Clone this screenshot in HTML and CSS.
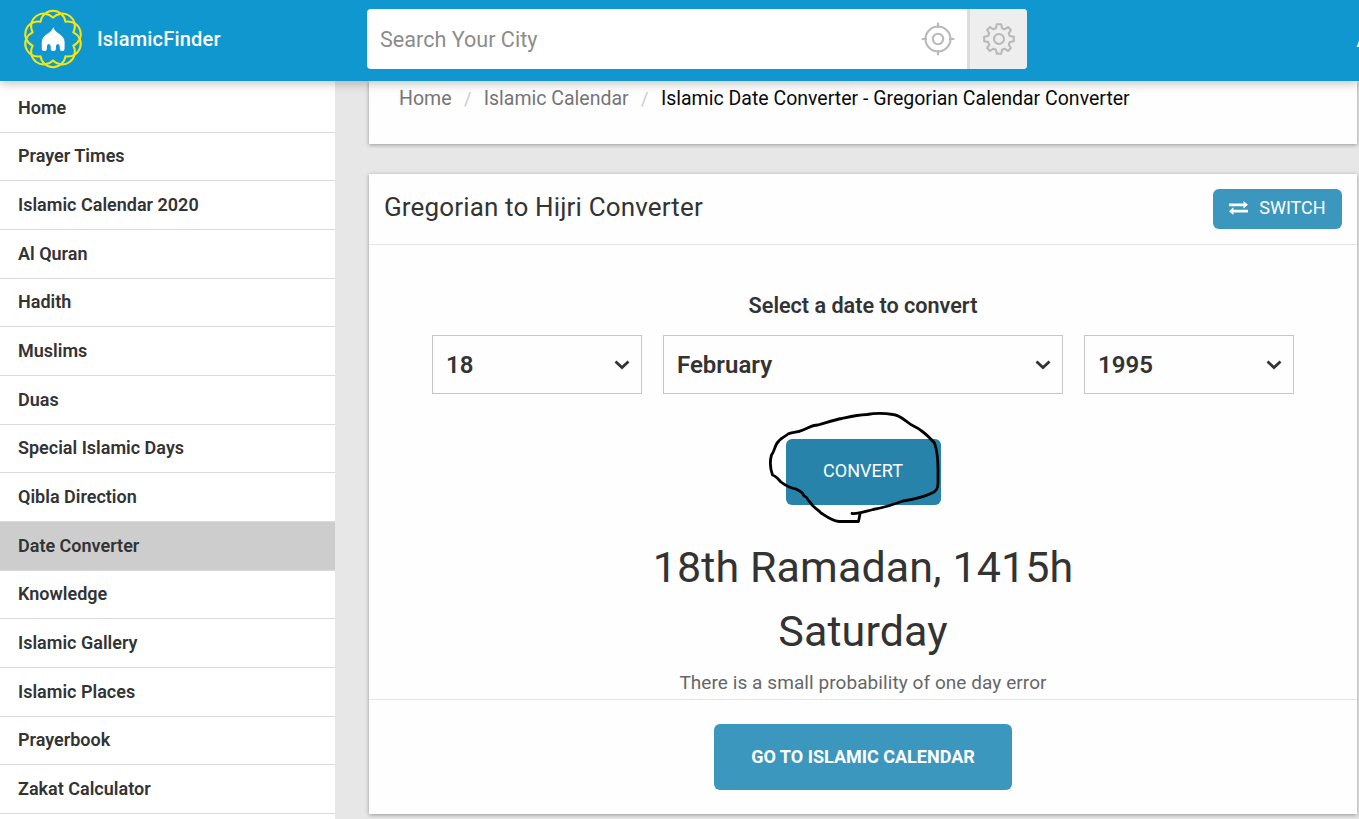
FILE: index.html
```html
<!DOCTYPE html>
<html lang="en">
<head>
  <meta charset="UTF-8" />
  <title>Islamic Date Converter - Gregorian Calendar Converter</title>
  <link rel="stylesheet" href="styles.css">
</head>
<body>

<header class="topbar">
  <a class="brand">
    <svg class="logo" width="60" height="60" viewBox="-30 -30 60 60">
      <g transform="scale(1.05)" fill="none" stroke="#f5e610" stroke-width="1.9" stroke-linejoin="round">
        <path d="M0 -20.3A12 12 0 0 1 19.3 -6.3A12 12 0 0 1 11.9 16.4A12 12 0 0 1 -11.9 16.4A12 12 0 0 1 -19.3 -6.3A12 12 0 0 1 0 -20.3Z"/>
        <path d="M0 20.3A12 12 0 0 1 -19.3 6.3A12 12 0 0 1 -11.9 -16.4A12 12 0 0 1 11.9 -16.4A12 12 0 0 1 19.3 6.3A12 12 0 0 1 0 20.3Z"/>
      </g>
      <path fill="#fff" d="M0.3 -12C1 -9 3 -7.2 6 -5.3C9.5 -3 11.6 -.5 11.6 3V9.5Q11.6 12 9.2 12Q6.8 12 6.8 9.5V7.5Q6.8 5 4.9 5Q2.9 5 2.9 7.5V9.5Q2.9 12 .3 12Q-2.3 12 -2.3 9.5V7.5Q-2.3 5 -4.2 5Q-6.1 5 -6.1 7.5V9.5Q-6.1 12 -8.7 12Q-11.2 12 -11.2 9.5V3C-11.2 -.5 -9 -3 -5.5 -5.3C-2.5 -7.2 -.5 -9 .3 -12Z"/>
    </svg>
    <span class="brand-name">IslamicFinder</span>
  </a>
  <div class="search">
    <span class="search-text">Search Your City</span>
    <svg class="locate" width="34" height="34" viewBox="-17 -17 34 34" fill="none" stroke="#b9b9b9" stroke-width="2.1">
      <circle r="12.5"/>
      <circle r="5.2"/>
      <path d="M0 -16.3V-11M0 16.3V11M-16.3 0H-11M16.3 0H11"/>
    </svg>
    <div class="settings">
      <svg width="34" height="34" viewBox="-17 -17 34 34" fill="none" stroke="#b9b9b9" stroke-width="2.1" stroke-linejoin="round">
        <circle r="5"/>
        <path d="M-2.2 -14.8H2.2L3.1 -10.8L5.6 -9.7L9 -11.9L11.9 -9L9.7 -5.6L10.8 -3.1L14.8 -2.2V2.2L10.8 3.1L9.7 5.6L11.9 9L9 11.9L5.6 9.7L3.1 10.8L2.2 14.8H-2.2L-3.1 10.8L-5.6 9.7L-9 11.9L-11.9 9L-9.7 5.6L-10.8 3.1L-14.8 2.2V-2.2L-10.8 -3.1L-9.7 -5.6L-11.9 -9L-9 -11.9L-5.6 -9.7L-3.1 -10.8Z"/>
      </svg>
    </div>
  </div>
  <a class="toplink">A</a>
</header>

<div class="page">
  <nav class="sidebar">
    <a>Home</a>
    <a>Prayer Times</a>
    <a>Islamic Calendar 2020</a>
    <a>Al Quran</a>
    <a>Hadith</a>
    <a>Muslims</a>
    <a>Duas</a>
    <a>Special Islamic Days</a>
    <a>Qibla Direction</a>
    <a class="active">Date Converter</a>
    <a>Knowledge</a>
    <a>Islamic Gallery</a>
    <a>Islamic Places</a>
    <a>Prayerbook</a>
    <a>Zakat Calculator</a>
  </nav>

  <main class="content">
    <div class="card breadcrumbs">
      <a>Home</a><span class="sep">/</span><a>Islamic Calendar</a><span class="sep">/</span><span class="current">Islamic Date Converter - Gregorian Calendar Converter</span>
    </div>

    <section class="card converter">
      <div class="card-head">
        <h1>Gregorian to Hijri Converter</h1>
        <button class="btn switch">
          <svg width="19" height="14" viewBox="0 0 19 14" fill="#fff">
            <path d="M0 2.5H14.5V0L19 3.8L14.5 7.6V5.2H0Z"/>
            <path d="M19 8.8H4.5V6.3L0 10.2L4.5 14V11.5H19Z"/>
          </svg>
          SWITCH
        </button>
      </div>

      <div class="card-body">
        <p class="label">Select a date to convert</p>
        <div class="selects">
          <div class="select">18<svg width="16" height="10" viewBox="0 0 16 10"><path d="M1.5 1.5L8 7.5L14.5 1.5"/></svg></div>
          <div class="select">February<svg width="16" height="10" viewBox="0 0 16 10"><path d="M1.5 1.5L8 7.5L14.5 1.5"/></svg></div>
          <div class="select">1995<svg width="16" height="10" viewBox="0 0 16 10"><path d="M1.5 1.5L8 7.5L14.5 1.5"/></svg></div>
        </div>
        <div class="convert-wrap">
          <button class="btn convert">CONVERT</button>
          <!-- hand drawn ring round the button -->
          <svg class="scribble" width="180" height="120" viewBox="765 407 180 120">
            <path d="M852 513.5C860 514 866 511 873 509.5C884 507.5 895 504 903 501C915 499 926 496 932 493C937 491 938 488 938 483V470C938 459 937 450 934.5 443C930 438 926 434 921 430.5C917 427 912 426 908 422.5C902 418 898 414.5 893 414.5C884 413 875 413 867 414.5C857 415 849 417 842 418.5C833 420 826 423 818 425C812 425 808 428 803 430C797 433 792 432 788 434C783 438 779 439 776.5 444C774 449 774 452 771.5 455C769.5 462 770 468 772.5 475C776 476 778 479 781 482C786 486 791 488 796 489C800 491 803 492 804 496C808 497 807 500 810 502C813 508 818 509 821 513C827 517 832 521 839 521.5H858.5L860 514"/>
          </svg>
        </div>
        <div class="result">18th Ramadan, 1415h</div>
        <div class="result">Saturday</div>
        <p class="note">There is a small probability of one day error</p>
      </div>

      <div class="card-foot">
        <a class="btn goto">GO TO ISLAMIC CALENDAR</a>
      </div>
    </section>
  </main>
</div>

</body>
</html>
```
FILE: styles.css
```css
* { box-sizing: border-box; }
body { margin: 0; height: 819px; overflow: hidden; background: #e7e7e7; font-family: Roboto, sans-serif; color: #333; }
p, h1 { margin: 0; }

.topbar { position: relative; z-index: 2; display: flex; align-items: center; height: 81px; background: #1097cf; box-shadow: 0 2px 10px rgba(0,0,0,.26); }
.brand { display: flex; flex: none; align-items: center; width: 367px; padding-left: 22.5px; padding-bottom: 4px; color: #fff; }
.brand-name { margin-left: 14.5px; font-size: 20px; font-weight: 500; letter-spacing: .2px; }
.search { display: flex; flex: none; align-items: center; width: 660px; height: 60px; margin-bottom: 3px; background: #fff; border-radius: 4px; overflow: hidden; }
.search-text { flex: 1; padding-left: 13px; font-size: 21.6px; color: #8c8c8c; }
.locate { margin-right: 12px; }
.settings { display: flex; align-items: center; justify-content: center; width: 60px; height: 60px; background: #eee; border-left: 3px solid #dcdcdc; }
.toplink { flex: none; margin-left: 329.5px; color: #fff; font-size: 18px; font-weight: 500; white-space: nowrap; }

.page { display: flex; height: 738px; }
.sidebar { width: 335px; padding-top: 3px; background: #fff; }
.sidebar a { display: flex; align-items: center; height: 48.68px; padding: 0 0 1.4px 18px; border-bottom: 1px solid #dadada; font-size: 18px; font-weight: 600; }
.sidebar .active { background: #cdcdcd; }

.content { width: 988px; margin-left: 34px; }
.card { background: #fefefe; box-shadow: 0 1px 4px rgba(0,0,0,.35); }
.breadcrumbs { height: 63px; padding: 6px 30px; font-size: 19.5px; line-height: 24px; color: #757575; white-space: nowrap; }
.sep { margin: 0 12.4px; font-size: 18px; color: #cacaca; }
.current { color: #0a0a0a; }

.converter { height: 640px; margin-top: 30px; }
.card-head { display: flex; align-items: center; justify-content: space-between; height: 71px; padding: 0 15px; border-bottom: 1px solid #e6e6e6; }
h1 { padding-bottom: 4px; font-size: 26px; font-weight: 400; letter-spacing: .15px; }
.btn { display: flex; align-items: center; justify-content: center; border: 0; border-radius: 6px; background: #3b97bd; color: #fff; font-family: inherit; font-size: 18px; }
.switch { gap: 11px; width: 129px; height: 40px; padding: 0 0 3px; }
.switch svg { margin-top: 1px; }

.card-body { display: flex; flex-direction: column; align-items: center; height: 455px; border-bottom: 1px solid #e6e6e6; }
.label { margin-top: 48px; font-size: 21.6px; font-weight: 600; line-height: 26px; }
.selects { display: grid; grid-template-columns: 210px 400px 210px; gap: 21px; margin-top: 16px; }
.select { display: flex; align-items: center; justify-content: space-between; height: 59px; padding: 0 11px 0 13px; border: 1px solid #c6c6c6; font-size: 24px; font-weight: 600; }
.select path { fill: none; stroke: #333; stroke-width: 2.8; }
.convert-wrap { position: relative; margin-top: 45px; }
.convert { width: 155px; height: 66px; padding: 0 0 3px; background: #2783a9; }
.scribble { position: absolute; left: -21px; top: -32px; }
.scribble path { fill: none; stroke: #000; stroke-width: 2.8; stroke-linecap: round; stroke-linejoin: round; }
.result { font-size: 43px; line-height: 64px; letter-spacing: .1px; }
.convert-wrap + .result { margin-top: 30px; }
.note { margin-top: 8px; font-size: 19px; line-height: 24px; letter-spacing: .07px; color: #666; }

.card-foot { display: flex; justify-content: center; padding-top: 24px; }
.goto { width: 298px; height: 66px; padding-bottom: 2px; font-weight: 700; }
```
